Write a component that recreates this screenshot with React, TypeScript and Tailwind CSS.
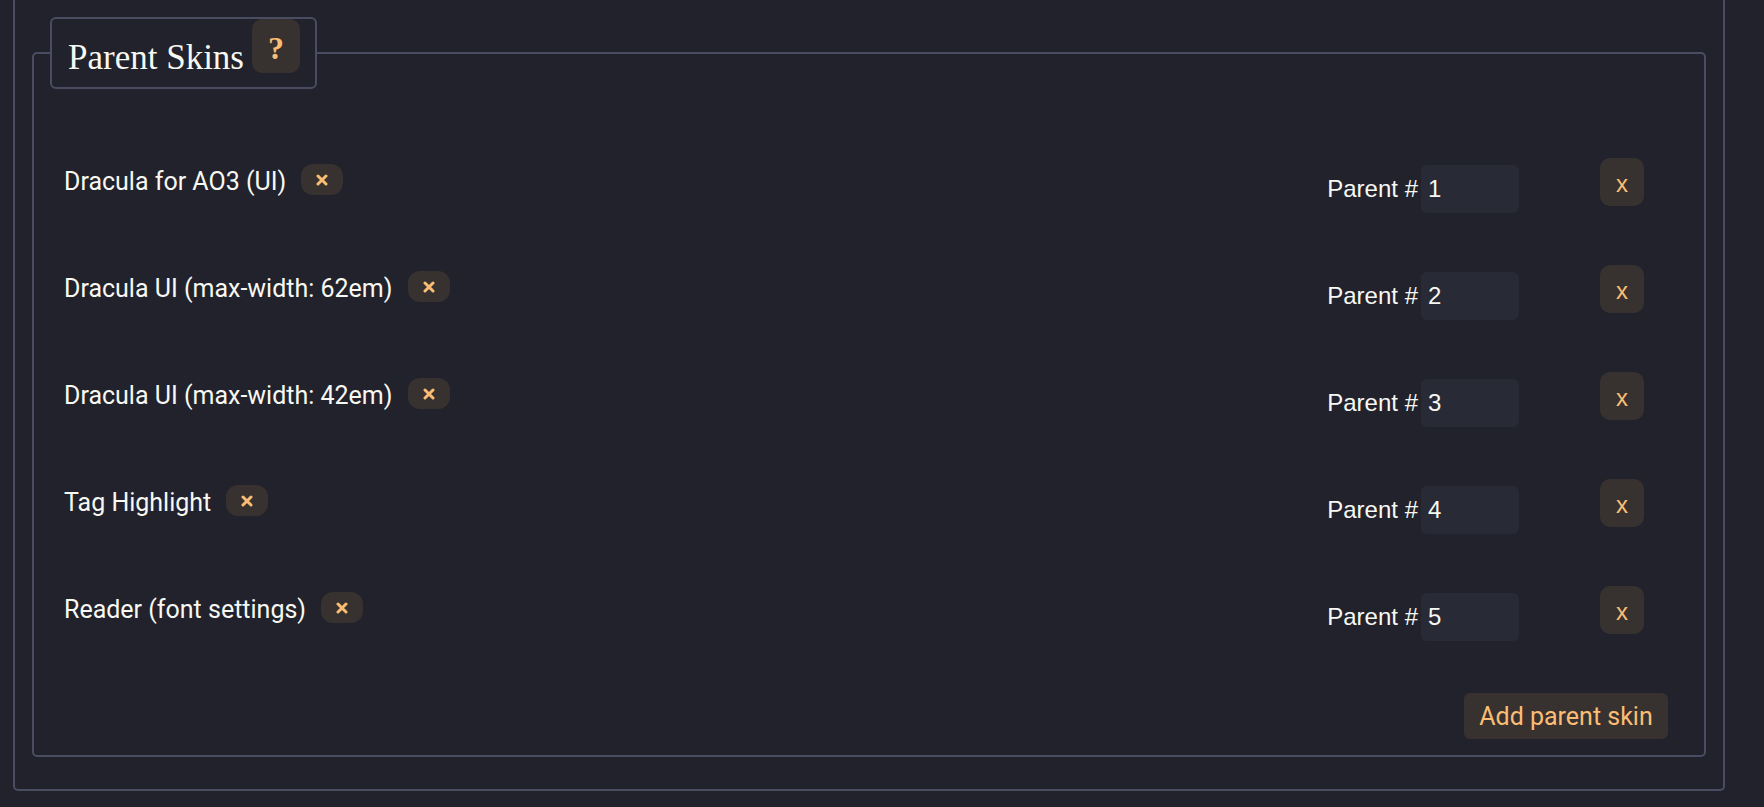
import React from "react";

const skins = [
  "Dracula for AO3 (UI)",
  "Dracula UI (max-width: 62em)",
  "Dracula UI (max-width: 42em)",
  "Tag Highlight",
  "Reader (font settings)",
];

const plex = { fontFamily: "Roboto, 'Noto Sans', sans-serif" };

function Cross() {
  return (
    <svg width="12" height="12" viewBox="0 0 12 12" fill="none">
      <path d="M2 2L10 10M10 2L2 10" stroke="#fbbd74" strokeWidth="3" strokeLinecap="round" />
    </svg>
  );
}

export default function App() {
  return (
    <div className="w-[1764px] h-[807px] overflow-hidden bg-[#21222c] text-[#f8f8f2]">
      <div className="ml-[13px] w-[1712px] border-2 border-t-0 border-[#4a4d62] rounded-b-[5px] px-[17px] pt-[17px] pb-[32px]">
        <fieldset className="border-2 border-[#4a4d62] rounded-[5px] pl-4">
          <legend className="border-2 border-[#4a4d62] rounded-[6px]">
            <div className="flex items-start pl-4 pr-[15px] pb-[9px]">
              <span
                className="w-[184px] mt-[19px] text-[35px] leading-[40px] text-[#f8f8f2]"
                style={{ fontFamily: "Georgia, 'Liberation Serif', 'DejaVu Serif', serif" }}
              >
                Parent Skins
              </span>
              <button
                className="w-[48px] h-[54px] rounded-[10px] bg-[#37322f] flex items-center justify-center text-[32px] font-bold text-[#fbbd74] leading-none pt-[4px]"
                style={{ fontFamily: "'Liberation Serif', serif" }}
              >
                ?
              </button>
            </div>
          </legend>
          <div className="pt-[69px] pr-[16px]">
            {skins.map((s, i) => (
              <div key={s} className="flex items-start h-[107px] pl-[14px] pr-[44px]">
                <div className="flex items-start gap-[15px] mt-[6px] h-[31px]">
                  <span className="text-[25px] leading-[31px] mt-[2px]" style={plex}>
                    {s}
                  </span>
                  <span className="w-[42px] h-[31px] rounded-[12px] bg-[#37322f] flex items-center justify-center">
                    <Cross />
                  </span>
                </div>
                <div className="ml-auto flex items-center mt-[7px]">
                  <label
                    className="text-[24px] leading-[30px] mr-[3px]"
                    style={{ fontFamily: "'Liberation Sans', Arial, sans-serif" }}
                  >
                    Parent #
                  </label>
                  <input
                    readOnly
                    value={String(i + 1)}
                    className="w-[98px] h-[48px] rounded-[6px] bg-[#282a36] pl-[7px] text-[24px] text-[#f8f8f2] outline-none border-0"
                    style={{ fontFamily: "'Liberation Sans', Arial, sans-serif" }}
                  />
                </div>
                <button
                  className="ml-[81px] w-[44px] h-[48px] rounded-[10px] bg-[#37322f] text-[#fbbd74] text-[24px] leading-none flex items-center justify-center pt-[4px]"
                  style={{ fontFamily: "'Liberation Sans', Arial, sans-serif" }}
                >
                  x
                </button>
              </div>
            ))}
            <div className="flex justify-end pr-[20px] pb-[16px]">
              <button
                className="w-[204px] h-[46px] rounded-[6px] bg-[#37322f] text-[#fbbd74] text-[25px] leading-none flex items-center justify-center"
                style={plex}
              >
                Add parent skin
              </button>
            </div>
          </div>
        </fieldset>
      </div>
    </div>
  );
}
